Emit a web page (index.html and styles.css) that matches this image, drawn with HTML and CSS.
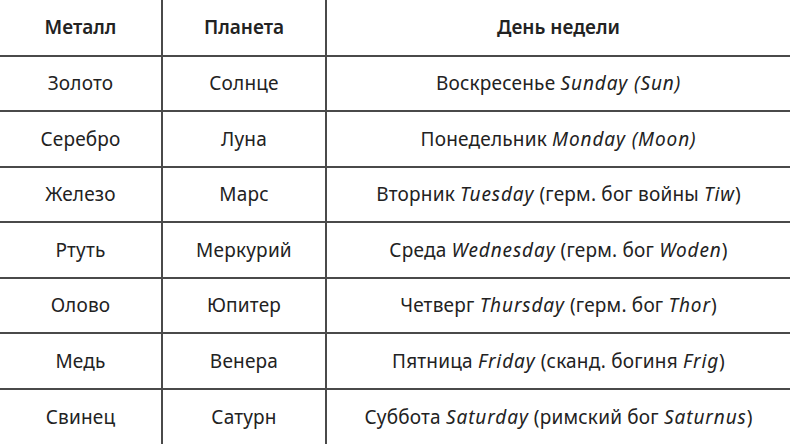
FILE: index.html
```html
<!DOCTYPE html>
<html lang="ru">
<head>
<meta charset="utf-8">
<link rel="stylesheet" href="styles.css">
</head>
<body>
<table class="tbl">
  <thead>
    <tr><th class="c1">Металл</th><th class="c2">Планета</th><th class="c3">День недели</th></tr>
  </thead>
  <tbody>
    <tr><td>Золото</td><td>Солнце</td><td>Воскресенье <i>Sunday (Sun)</i></td></tr>
    <tr><td>Серебро</td><td>Луна</td><td>Понедельник <i>Monday (Moon)</i></td></tr>
    <tr><td>Железо</td><td>Марс</td><td>Вторник <i>Tuesday</i> (герм. бог войны <i>Tiw</i>)</td></tr>
    <tr><td>Ртуть</td><td>Меркурий</td><td>Среда <i>Wednesday</i> (герм. бог <i>Woden</i>)</td></tr>
    <tr><td>Олово</td><td>Юпитер</td><td>Четверг <i>Thursday</i> (герм. бог <i>Thor</i>)</td></tr>
    <tr><td>Медь</td><td>Венера</td><td>Пятница <i>Friday</i> (сканд. богиня <i>Frig</i>)</td></tr>
    <tr><td>Свинец</td><td>Сатурн</td><td>Суббота <i>Saturday</i> (римский бог <i>Saturnus</i>)</td></tr>
  </tbody>
</table>
</body>
</html>
```

FILE: styles.css
```css
html, body {
  margin: 0;
  padding: 0;
  background: #fff;
}
body {
  font-family: "Noto Sans", "Open Sans", sans-serif;
  color: #222;
  width: 790px;
  height: 444px;
  overflow: hidden;
}
.tbl {
  border-collapse: collapse;
  width: 790px;
  table-layout: fixed;
}
.tbl th, .tbl td {
  height: 55.5px;
  padding: 0;
  text-align: center;
  vertical-align: middle;
  font-size: 19px;
  border: 2px solid #4a4a4a;
  box-sizing: border-box;
}
.tbl td {
  letter-spacing: 0.2px;
}
.tbl i {
  letter-spacing: 0.9px;
}
.tbl th {
  font-weight: 600;
  border-top: none;
}
.tbl tr > :first-child { border-left: none; }
.tbl tr > :last-child { border-right: none; }
.tbl tbody tr:last-child td { border-bottom: none; }
.c1 { width: 162px; }
.c2 { width: 164px; }
.c3 { width: auto; }
```
